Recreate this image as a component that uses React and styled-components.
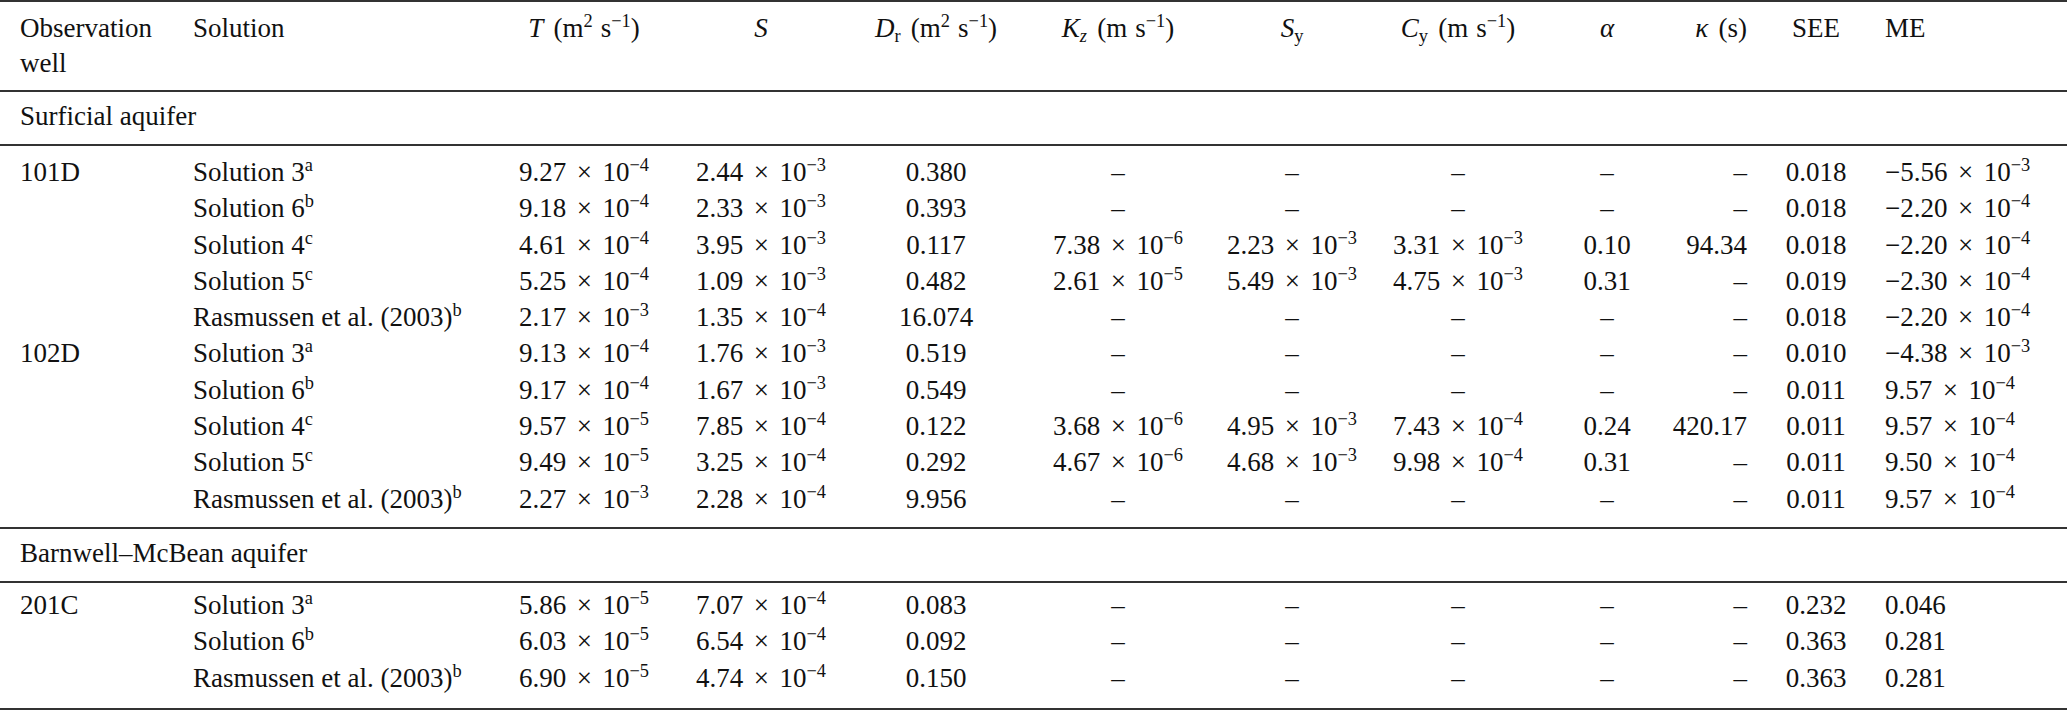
import React from "react";
import styled, { createGlobalStyle } from "styled-components";

const GlobalStyle = createGlobalStyle`
  html, body { margin: 0; padding: 0; background: #ffffff; }
  body {
    font-family: "Liberation Serif", "Times New Roman", serif;
    color: #111111;
  }
`;

const COLS = [
  { w: 183, align: "left", pl: 20 },
  { w: 310, align: "left", pl: 10 },
  { w: 182, align: "center" },
  { w: 172, align: "center" },
  { w: 178, align: "center" },
  { w: 186, align: "center" },
  { w: 162, align: "center" },
  { w: 170, align: "center" },
  { w: 128, align: "center" },
  { w: 86, align: "right", pr: 10 },
  { w: 118, align: "center" },
  { w: 192, align: "left", pl: 10 },
];

const TEMPLATE = COLS.map((c) => `${c.w}px`).join(" ");
const RULE = "2px solid #333333";

const Table = styled.div`
  width: 2067px;
  font-size: 27px;
  border-top: ${RULE};
`;

const HeaderRow = styled.div`
  display: grid;
  grid-template-columns: ${TEMPLATE};
  align-items: start;
  padding: 9px 0;
  line-height: 35px;
  border-bottom: ${RULE};
`;

const SectionRow = styled.div`
  padding: 7px 0 10px 20px;
  line-height: 35px;
  border-bottom: ${RULE};
`;

const Group = styled.div`
  padding-top: ${(p) => p.$pt}px;
  padding-bottom: ${(p) => p.$pb}px;
  border-bottom: ${RULE};
`;

const DataRow = styled.div`
  display: grid;
  grid-template-columns: ${TEMPLATE};
  line-height: 36.3px;
`;

const Cell = styled.div`
  text-align: ${(p) => p.$align};
  padding-left: ${(p) => p.$pl || 0}px;
  padding-right: ${(p) => p.$pr || 0}px;
  white-space: ${(p) => (p.$wrap ? "normal" : "nowrap")};
`;

const Sup = styled.sup`
  font-size: 0.68em;
  line-height: 0;
  vertical-align: 0.53em;
`;

const Sub = styled.sub`
  font-size: 0.68em;
  line-height: 0;
  vertical-align: -0.28em;
  font-style: ${(p) => (p.$italic ? "italic" : "normal")};
`;

const Var = styled.i`
  font-style: italic;
`;

const Gap = styled.span`
  display: inline-block;
  width: ${(p) => p.$w}em;
`;

const Times = styled.span`
  margin: 0 0.14em;
`;

const Unit = ({ children }) => (
  <>
    <Gap $w={0.38} />({children})
  </>
);

const PerSecond = () => (
  <>
    <Gap $w={0.3} />s<Sup>−1</Sup>
  </>
);

const HEADERS = [
  "Observation well",
  "Solution",
  <>
    <Var>T</Var>
    <Unit>
      m<Sup>2</Sup>
      <PerSecond />
    </Unit>
  </>,
  <Var>S</Var>,
  <>
    <Var>D</Var>
    <Sub>r</Sub>
    <Unit>
      m<Sup>2</Sup>
      <PerSecond />
    </Unit>
  </>,
  <>
    <Var>K</Var>
    <Sub $italic>z</Sub>
    <Unit>
      m<PerSecond />
    </Unit>
  </>,
  <>
    <Var>S</Var>
    <Sub>y</Sub>
  </>,
  <>
    <Var>C</Var>
    <Sub>y</Sub>
    <Unit>
      m<PerSecond />
    </Unit>
  </>,
  <Var>α</Var>,
  <>
    <Var>κ</Var>
    <Unit>s</Unit>
  </>,
  "SEE",
  "ME",
];

const D = "–";

const SURFICIAL = [
  ["101D", "Solution 3|a", "9.27e-4", "2.44e-3", "0.380", D, D, D, D, D, "0.018", "-5.56e-3"],
  ["", "Solution 6|b", "9.18e-4", "2.33e-3", "0.393", D, D, D, D, D, "0.018", "-2.20e-4"],
  ["", "Solution 4|c", "4.61e-4", "3.95e-3", "0.117", "7.38e-6", "2.23e-3", "3.31e-3", "0.10", "94.34", "0.018", "-2.20e-4"],
  ["", "Solution 5|c", "5.25e-4", "1.09e-3", "0.482", "2.61e-5", "5.49e-3", "4.75e-3", "0.31", D, "0.019", "-2.30e-4"],
  ["", "Rasmussen et al. (2003)|b", "2.17e-3", "1.35e-4", "16.074", D, D, D, D, D, "0.018", "-2.20e-4"],
  ["102D", "Solution 3|a", "9.13e-4", "1.76e-3", "0.519", D, D, D, D, D, "0.010", "-4.38e-3"],
  ["", "Solution 6|b", "9.17e-4", "1.67e-3", "0.549", D, D, D, D, D, "0.011", "9.57e-4"],
  ["", "Solution 4|c", "9.57e-5", "7.85e-4", "0.122", "3.68e-6", "4.95e-3", "7.43e-4", "0.24", "420.17", "0.011", "9.57e-4"],
  ["", "Solution 5|c", "9.49e-5", "3.25e-4", "0.292", "4.67e-6", "4.68e-3", "9.98e-4", "0.31", D, "0.011", "9.50e-4"],
  ["", "Rasmussen et al. (2003)|b", "2.27e-3", "2.28e-4", "9.956", D, D, D, D, D, "0.011", "9.57e-4"],
];

const BARNWELL = [
  ["201C", "Solution 3|a", "5.86e-5", "7.07e-4", "0.083", D, D, D, D, D, "0.232", "0.046"],
  ["", "Solution 6|b", "6.03e-5", "6.54e-4", "0.092", D, D, D, D, D, "0.363", "0.281"],
  ["", "Rasmussen et al. (2003)|b", "6.90e-5", "4.74e-4", "0.150", D, D, D, D, D, "0.363", "0.281"],
];

function renderValue(v) {
  if (v.includes("|")) {
    const [name, note] = v.split("|");
    return (
      <>
        {name}
        <Sup>{note}</Sup>
      </>
    );
  }
  const m = v.match(/^(-?)([\d.]+)e(-?\d+)$/);
  if (!m) return v;
  return (
    <>
      {m[1] ? "−" : ""}
      {m[2]} <Times>×</Times> 10<Sup>{m[3].replace("-", "−")}</Sup>
    </>
  );
}

const Rows = ({ rows, pt, pb }) => (
  <Group $pt={pt} $pb={pb}>
    {rows.map((row, i) => (
      <DataRow key={i}>
        {row.map((v, j) => (
          <Cell key={j} $align={COLS[j].align} $pl={COLS[j].pl} $pr={COLS[j].pr}>
            {renderValue(v)}
          </Cell>
        ))}
      </DataRow>
    ))}
  </Group>
);

export default function App() {
  return (
    <>
      <GlobalStyle />
      <Table>
        <HeaderRow>
          {HEADERS.map((h, j) => (
            <Cell
              key={j}
              $align={COLS[j].align}
              $pl={COLS[j].pl}
              $pr={COLS[j].pr}
              $wrap={j === 0}
            >
              {h}
            </Cell>
          ))}
        </HeaderRow>
        <SectionRow>Surficial aquifer</SectionRow>
        <Rows rows={SURFICIAL} pt={8} pb={10} />
        <SectionRow>Barnwell–McBean aquifer</SectionRow>
        <Rows rows={BARNWELL} pt={4} pb={12} />
      </Table>
    </>
  );
}
